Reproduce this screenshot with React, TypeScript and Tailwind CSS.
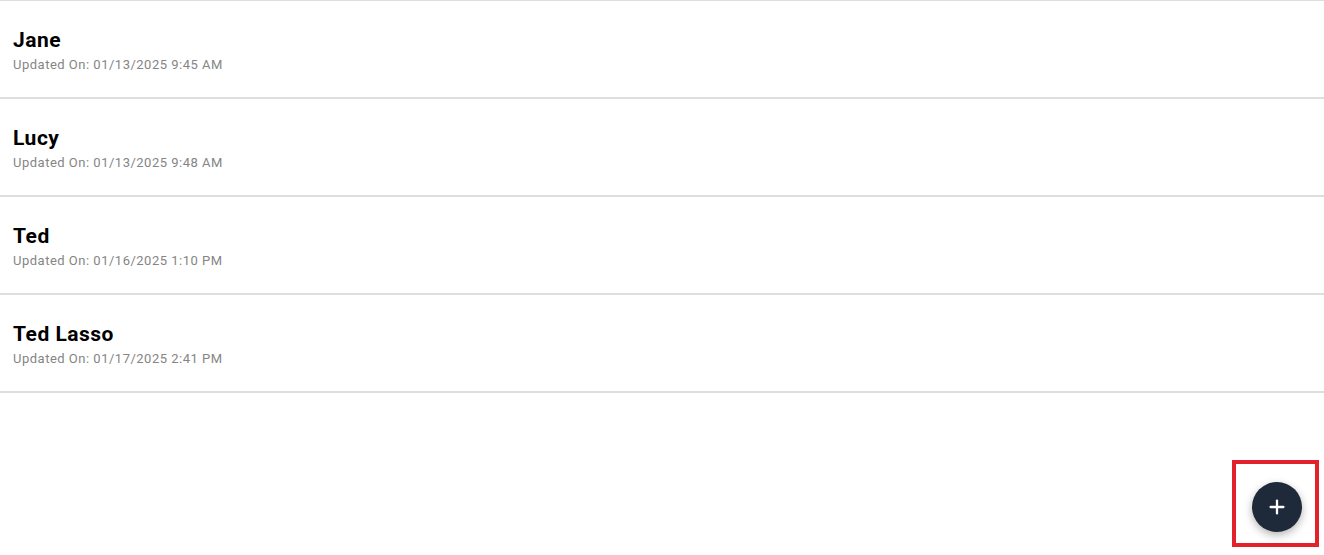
import { Plus } from "lucide-react";

const notes = [
  { name: "Jane", updated: "01/13/2025 9:45 AM" },
  { name: "Lucy", updated: "01/13/2025 9:48 AM" },
  { name: "Ted", updated: "01/16/2025 1:10 PM" },
  { name: "Ted Lasso", updated: "01/17/2025 2:41 PM" },
];

const App = () => {
  return (
    <div className="relative h-[555px] w-full overflow-hidden bg-white font-['Roboto',_'Liberation_Sans',_sans-serif]">
      {/* List */}
      <ul className="border-t border-[#dedede]">
        {notes.map((n) => (
          <li
            key={n.name}
            className="flex h-[98px] flex-col justify-center border-b-2 border-[#dedede] px-[13px] pt-[2px]"
          >
            <span className="text-[21px] font-bold leading-[26px] tracking-[0.5px] text-black">{n.name}</span>
            <span className="mt-[4px] text-[13px] leading-[16px] tracking-[0.5px] text-[#858585]">
              Updated On: {n.updated}
            </span>
          </li>
        ))}
      </ul>

      {/* Floating add button */}
      <button className="absolute bottom-[23px] right-[22px] flex h-[50px] w-[50px] items-center justify-center rounded-full bg-[#1e2939] text-white shadow-[0_3px_8px_rgba(0,0,0,0.3)]">
        <Plus size={22} strokeWidth={2.5} />
      </button>

      {/* highlight box */}
      <div className="pointer-events-none absolute bottom-[8px] right-[5px] h-[87px] w-[87px] border-[4px] border-[#e3212b]" />
    </div>
  );
};

export default App;
